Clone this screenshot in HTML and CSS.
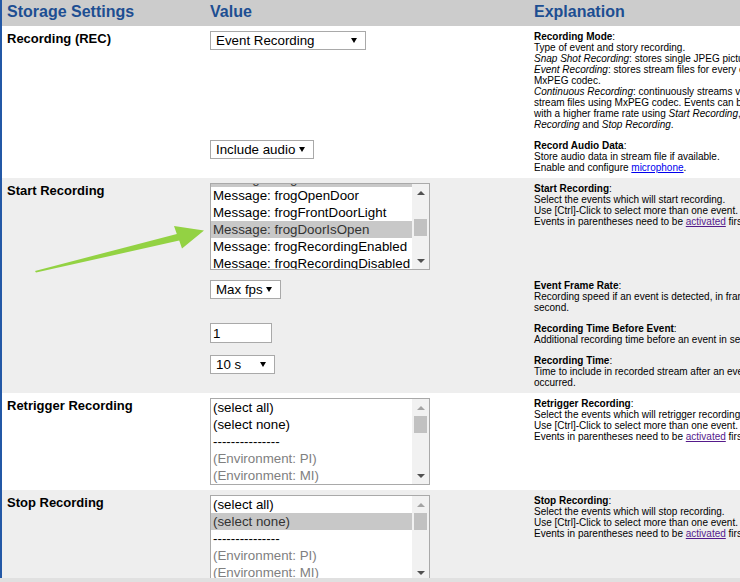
FILE: index.html
```html
<!DOCTYPE html>
<html>
<head>
<meta charset="utf-8">
<title>Storage Settings</title>
<link rel="stylesheet" href="styles.css">
</head>
<body>
<div class="settings">
  <div class="row head">
    <div class="h-label">Storage Settings</div>
    <div class="h-value">Value</div>
    <div class="h-expl">Explanation</div>
  </div>

  <div class="row group">
    <div class="label span2">Recording (REC)</div>
    <div class="value">
      <div class="select w-mode"><span>Event Recording</span><svg class="dd" viewBox="0 0 6 5"><polygon points="0,0 6,0 3,5"/></svg></div>
    </div>
    <div class="expl">
      <b>Recording Mode</b>:<br>
      Type of event and story recording.<br>
      <i>Snap Shot Recording</i>: stores single JPEG pictures for every event.<br>
      <i>Event Recording</i>: stores stream files for every event using<br>
      MxPEG codec.<br>
      <i>Continuous Recording</i>: continuously streams video into<br>
      stream files using MxPEG codec. Events can be recorded<br>
      with a higher frame rate using <i>Start Recording</i>, <i>Retrigger</i><br>
      <i>Recording</i> and <i>Stop Recording</i>.
    </div>
    <div class="value">
      <div class="select w-audio"><span>Include audio</span><svg class="dd" viewBox="0 0 6 5"><polygon points="0,0 6,0 3,5"/></svg></div>
    </div>
    <div class="expl">
      <b>Record Audio Data</b>:<br>
      Store audio data in stream file if available.<br>
      Enable and configure <a class="link" href="#">microphone</a>.
    </div>
  </div>

  <div class="row group alt">
    <div class="label span4">Start Recording</div>
    <div class="value">
      <div class="listbox">
        <div class="opts scrolled">
          <div class="opt sel">Message: frogDoorbell</div>
          <div class="opt">Message: frogOpenDoor</div>
          <div class="opt">Message: frogFrontDoorLight</div>
          <div class="opt sel">Message: frogDoorIsOpen</div>
          <div class="opt">Message: frogRecordingEnabled</div>
          <div class="opt">Message: frogRecordingDisabled</div>
        </div>
        <div class="sb">
          <div class="sb-btn"><span class="tri-up"></span></div>
          <div class="sb-track"><div class="thumb thumb-mid"></div></div>
          <div class="sb-btn"><span class="tri-down"></span></div>
        </div>
      </div>
    </div>
    <div class="expl">
      <b>Start Recording</b>:<br>
      Select the events which will start recording.<br>
      Use [Ctrl]-Click to select more than one event.<br>
      Events in parentheses need to be <a class="visited" href="#">activated</a> first.
    </div>
    <div class="value">
      <div class="select w-fps"><span>Max fps</span><svg class="dd" viewBox="0 0 6 5"><polygon points="0,0 6,0 3,5"/></svg></div>
    </div>
    <div class="expl">
      <b>Event Frame Rate</b>:<br>
      Recording speed if an event is detected, in frames per<br>
      second.
    </div>
    <div class="value">
      <input class="num" type="text" value="1">
    </div>
    <div class="expl">
      <b>Recording Time Before Event</b>:<br>
      Additional recording time before an event in seconds.
    </div>
    <div class="value">
      <div class="select w-time"><span>10 s</span><svg class="dd" viewBox="0 0 6 5"><polygon points="0,0 6,0 3,5"/></svg></div>
    </div>
    <div class="expl">
      <b>Recording Time</b>:<br>
      Time to include in recorded stream after an event has<br>
      occurred.
    </div>
  </div>

  <div class="row group">
    <div class="label">Retrigger Recording</div>
    <div class="value">
      <div class="listbox">
        <div class="opts">
          <div class="opt">(select all)</div>
          <div class="opt">(select none)</div>
          <div class="opt">---------------</div>
          <div class="opt dis">(Environment: PI)</div>
          <div class="opt dis">(Environment: MI)</div>
        </div>
        <div class="sb">
          <div class="sb-btn"><span class="tri-up off"></span></div>
          <div class="sb-track"><div class="thumb"></div></div>
          <div class="sb-btn"><span class="tri-down"></span></div>
        </div>
      </div>
    </div>
    <div class="expl">
      <b>Retrigger Recording</b>:<br>
      Select the events which will retrigger recording.<br>
      Use [Ctrl]-Click to select more than one event.<br>
      Events in parentheses need to be <a class="visited" href="#">activated</a> first.
    </div>
  </div>

  <div class="row group alt">
    <div class="label">Stop Recording</div>
    <div class="value">
      <div class="listbox">
        <div class="opts">
          <div class="opt">(select all)</div>
          <div class="opt sel">(select none)</div>
          <div class="opt">---------------</div>
          <div class="opt dis">(Environment: PI)</div>
          <div class="opt dis">(Environment: MI)</div>
        </div>
        <div class="sb">
          <div class="sb-btn"><span class="tri-up off"></span></div>
          <div class="sb-track"><div class="thumb"></div></div>
          <div class="sb-btn"><span class="tri-down"></span></div>
        </div>
      </div>
    </div>
    <div class="expl">
      <b>Stop Recording</b>:<br>
      Select the events which will stop recording.<br>
      Use [Ctrl]-Click to select more than one event.<br>
      Events in parentheses need to be <a class="visited" href="#">activated</a> first.
    </div>
  </div>
</div>

<svg class="pointer" width="740" height="582" viewBox="0 0 740 582">
  <polygon points="35,271 176.8,233.9 174,226 204,230.5 182,248.5 179.2,240.6 36,272.5"/>
</svg>

<div class="bottom-band"></div>
</body>
</html>
```

FILE: styles.css
```css
html, body {
  margin: 0;
  padding: 0;
  overflow: hidden;
  background: #fff;
}

body {
  width: 740px;
  height: 582px;
  position: relative;
  font-family: "Liberation Sans", Arial, sans-serif;
  color: #000;
}

.settings {
  border-left: 2px solid #2358a6;
  min-height: 582px;
  box-sizing: border-box;
}

.row {
  display: grid;
  grid-template-columns: 202px 324px 1fr;
}

.head {
  height: 26px;
  background: #ccc;
  color: #1d4e92;
  font-weight: bold;
  font-size: 16px;
  line-height: 24px;
}

.h-label { padding-left: 5px; }
.h-value,
.h-expl { padding-left: 6px; }

.group { background: #fff; }
.group.alt { background: #eee; }

.label {
  grid-column: 1;
  padding: 5px 0 5px 5px;
  font-weight: bold;
  font-size: 13px;
  line-height: 15px;
}

.span2 { grid-row: span 2; }
.span4 { grid-row: span 4; }

.value {
  grid-column: 2;
  padding: 5px 0 5px 6px;
}

.expl {
  grid-column: 3;
  padding: 5px 0 5px 6px;
  font-size: 10px;
  line-height: 11px;
  white-space: nowrap;
}

.link { color: #0000ee; }
.visited { color: #551a8b; }

/* drop-down selects */
.select {
  display: flex;
  align-items: center;
  justify-content: space-between;
  height: 19px;
  box-sizing: border-box;
  border: 1px solid #a9a9a9;
  background: #fff;
  font-size: 13.33px;
  line-height: 15px;
  padding: 0 8px 1px 5px;
}

.dd {
  width: 6px;
  height: 5px;
  fill: #000;
  margin-top: 1px;
}

.w-mode { width: 156px; }
.w-audio { width: 104px; }
.w-fps { width: 71px; }
.w-time { width: 65px; }

.num {
  display: block;
  margin: 0;
  width: 62px;
  height: 20px;
  box-sizing: border-box;
  border: 1px solid #a9a9a9;
  padding: 0 0 0 2px;
  font-family: "Liberation Sans", Arial, sans-serif;
  font-size: 13.33px;
  color: #000;
  background: #fff;
  outline: none;
}

/* multi-select list boxes */
.listbox {
  display: flex;
  width: 220px;
  height: 87px;
  box-sizing: border-box;
  border: 1px solid #a9a9a9;
  background: #fff;
  overflow: hidden;
}

.opts {
  flex: 1;
  overflow: hidden;
  font-size: 13.33px;
}

.opt {
  height: 17px;
  line-height: 17px;
  padding-left: 2px;
  white-space: nowrap;
}

.opts.scrolled .opt:first-child { margin-top: -14px; }

.opt.sel {
  background: #c8c8c8;
  color: #333;
}

.opt.dis { color: #808080; }

.sb {
  width: 17px;
  background: #f1f1f1;
  display: flex;
  flex-direction: column;
}

.sb-btn {
  height: 17px;
  display: flex;
  align-items: center;
  justify-content: center;
}

.sb-track { flex: 1; }

.thumb {
  height: 17px;
  margin: 0 2px;
  background: #c1c1c1;
}

.thumb-mid { margin-top: 18px; }

.tri-up,
.tri-down {
  width: 0;
  height: 0;
  border-left: 4px solid transparent;
  border-right: 4px solid transparent;
}

.tri-up { border-bottom: 4px solid #505050; }
.tri-down { border-top: 4px solid #505050; }
.tri-up.off { border-bottom-color: #a3a3a3; }

/* callout arrow drawn over the page */
.pointer {
  position: absolute;
  left: 0;
  top: 0;
  pointer-events: none;
  fill: #93d243;
}

.bottom-band {
  position: fixed;
  left: 0;
  right: 0;
  bottom: 0;
  height: 4px;
  background: #e0e0e0;
}
```
